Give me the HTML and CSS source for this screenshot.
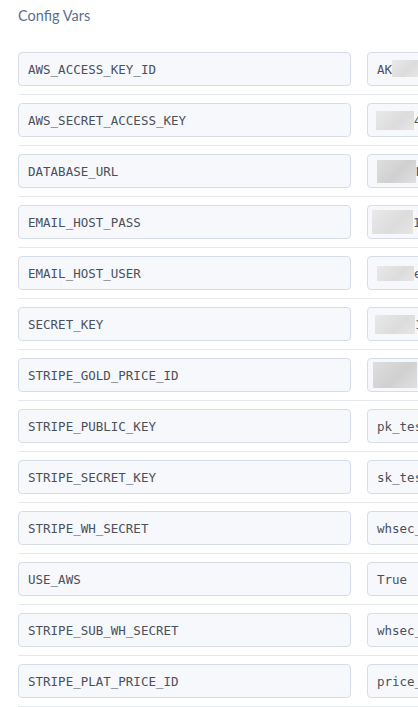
FILE: index.html
```html
<!DOCTYPE html>
<html>
<head>
<meta charset="utf-8">
<link rel="stylesheet" href="styles.css">
</head>
<body>
<div class="page">
  <h2 class="title">Config Vars</h2>
  <ul class="vars">
    <li class="row"><div class="field key">AWS_ACCESS_KEY_ID</div><div class="field val"><span>AK</span><i class="blur" style="width:26px;height:17px;margin-top:-1px"></i><span>F</span></div></li>
    <li class="row"><div class="field key">AWS_SECRET_ACCESS_KEY</div><div class="field val"><i class="blur" style="width:38px;height:19px;margin-left:-1px"></i><span>4</span></div></li>
    <li class="row"><div class="field key">DATABASE_URL</div><div class="field val"><i class="blur dark" style="width:39px;height:23px"></i><span>N</span></div></li>
    <li class="row"><div class="field key">EMAIL_HOST_PASS</div><div class="field val"><i class="blur" style="width:41px;height:24px;margin-left:-5px"></i><span>1</span></div></li>
    <li class="row"><div class="field key">EMAIL_HOST_USER</div><div class="field val"><i class="blur" style="width:37px;height:15px"></i><span>e</span></div></li>
    <li class="row"><div class="field key">SECRET_KEY</div><div class="field val"><i class="blur" style="width:40px;height:19px;margin-left:-2px"></i><span>1</span></div></li>
    <li class="row"><div class="field key">STRIPE_GOLD_PRICE_ID</div><div class="field val"><i class="blur dark" style="width:44px;height:26px;margin-left:-4px"></i></div></li>
    <li class="row"><div class="field key">STRIPE_PUBLIC_KEY</div><div class="field val">pk_test</div></li>
    <li class="row"><div class="field key">STRIPE_SECRET_KEY</div><div class="field val">sk_test</div></li>
    <li class="row"><div class="field key">STRIPE_WH_SECRET</div><div class="field val">whsec_</div></li>
    <li class="row"><div class="field key">USE_AWS</div><div class="field val">True</div></li>
    <li class="row"><div class="field key">STRIPE_SUB_WH_SECRET</div><div class="field val">whsec_</div></li>
    <li class="row"><div class="field key">STRIPE_PLAT_PRICE_ID</div><div class="field val">price_</div></li>
  </ul>
</div>
</body>
</html>
```
FILE: styles.css
```css
html, body {
  margin: 0;
  padding: 0;
  background: #ffffff;
  overflow: hidden;
}
.page {
  padding: 6px 0 0 18px;
  width: 500px;
}
.title {
  margin: 0;
  font-family: Lato, "Open Sans", sans-serif;
  font-weight: 400;
  font-size: 14.5px;
  line-height: 20px;
  color: #5a6f92;
}
.vars {
  list-style: none;
  margin: 26px 0 0 0;
  padding: 0;
}
.row {
  display: grid;
  grid-template-columns: 333px 140px;
  column-gap: 16px;
  padding-bottom: 8px;
  border-bottom: 1px solid #e6e9f0;
  margin-bottom: 8px;
}
.field {
  box-sizing: border-box;
  height: 34px;
  border: 1px solid #d6dce8;
  border-radius: 4px;
  background: #f7f8fb;
  padding: 0 9px;
  display: flex;
  align-items: center;
  font-family: "DejaVu Sans Mono", "Liberation Mono", monospace;
  font-size: 12.5px;
  color: #4a515c;
  white-space: nowrap;
  overflow: hidden;
}
.val {
  padding-left: 9px;
}
.blur {
  display: inline-block;
  flex: none;
  background: linear-gradient(135deg, #e9e9e9, #dcdcdc 60%, #e6e6e6);
  filter: blur(0.6px);
}
.blur.dark {
  background: linear-gradient(135deg, #dedede, #d0d0d0 55%, #e0e0e0);
}
```
